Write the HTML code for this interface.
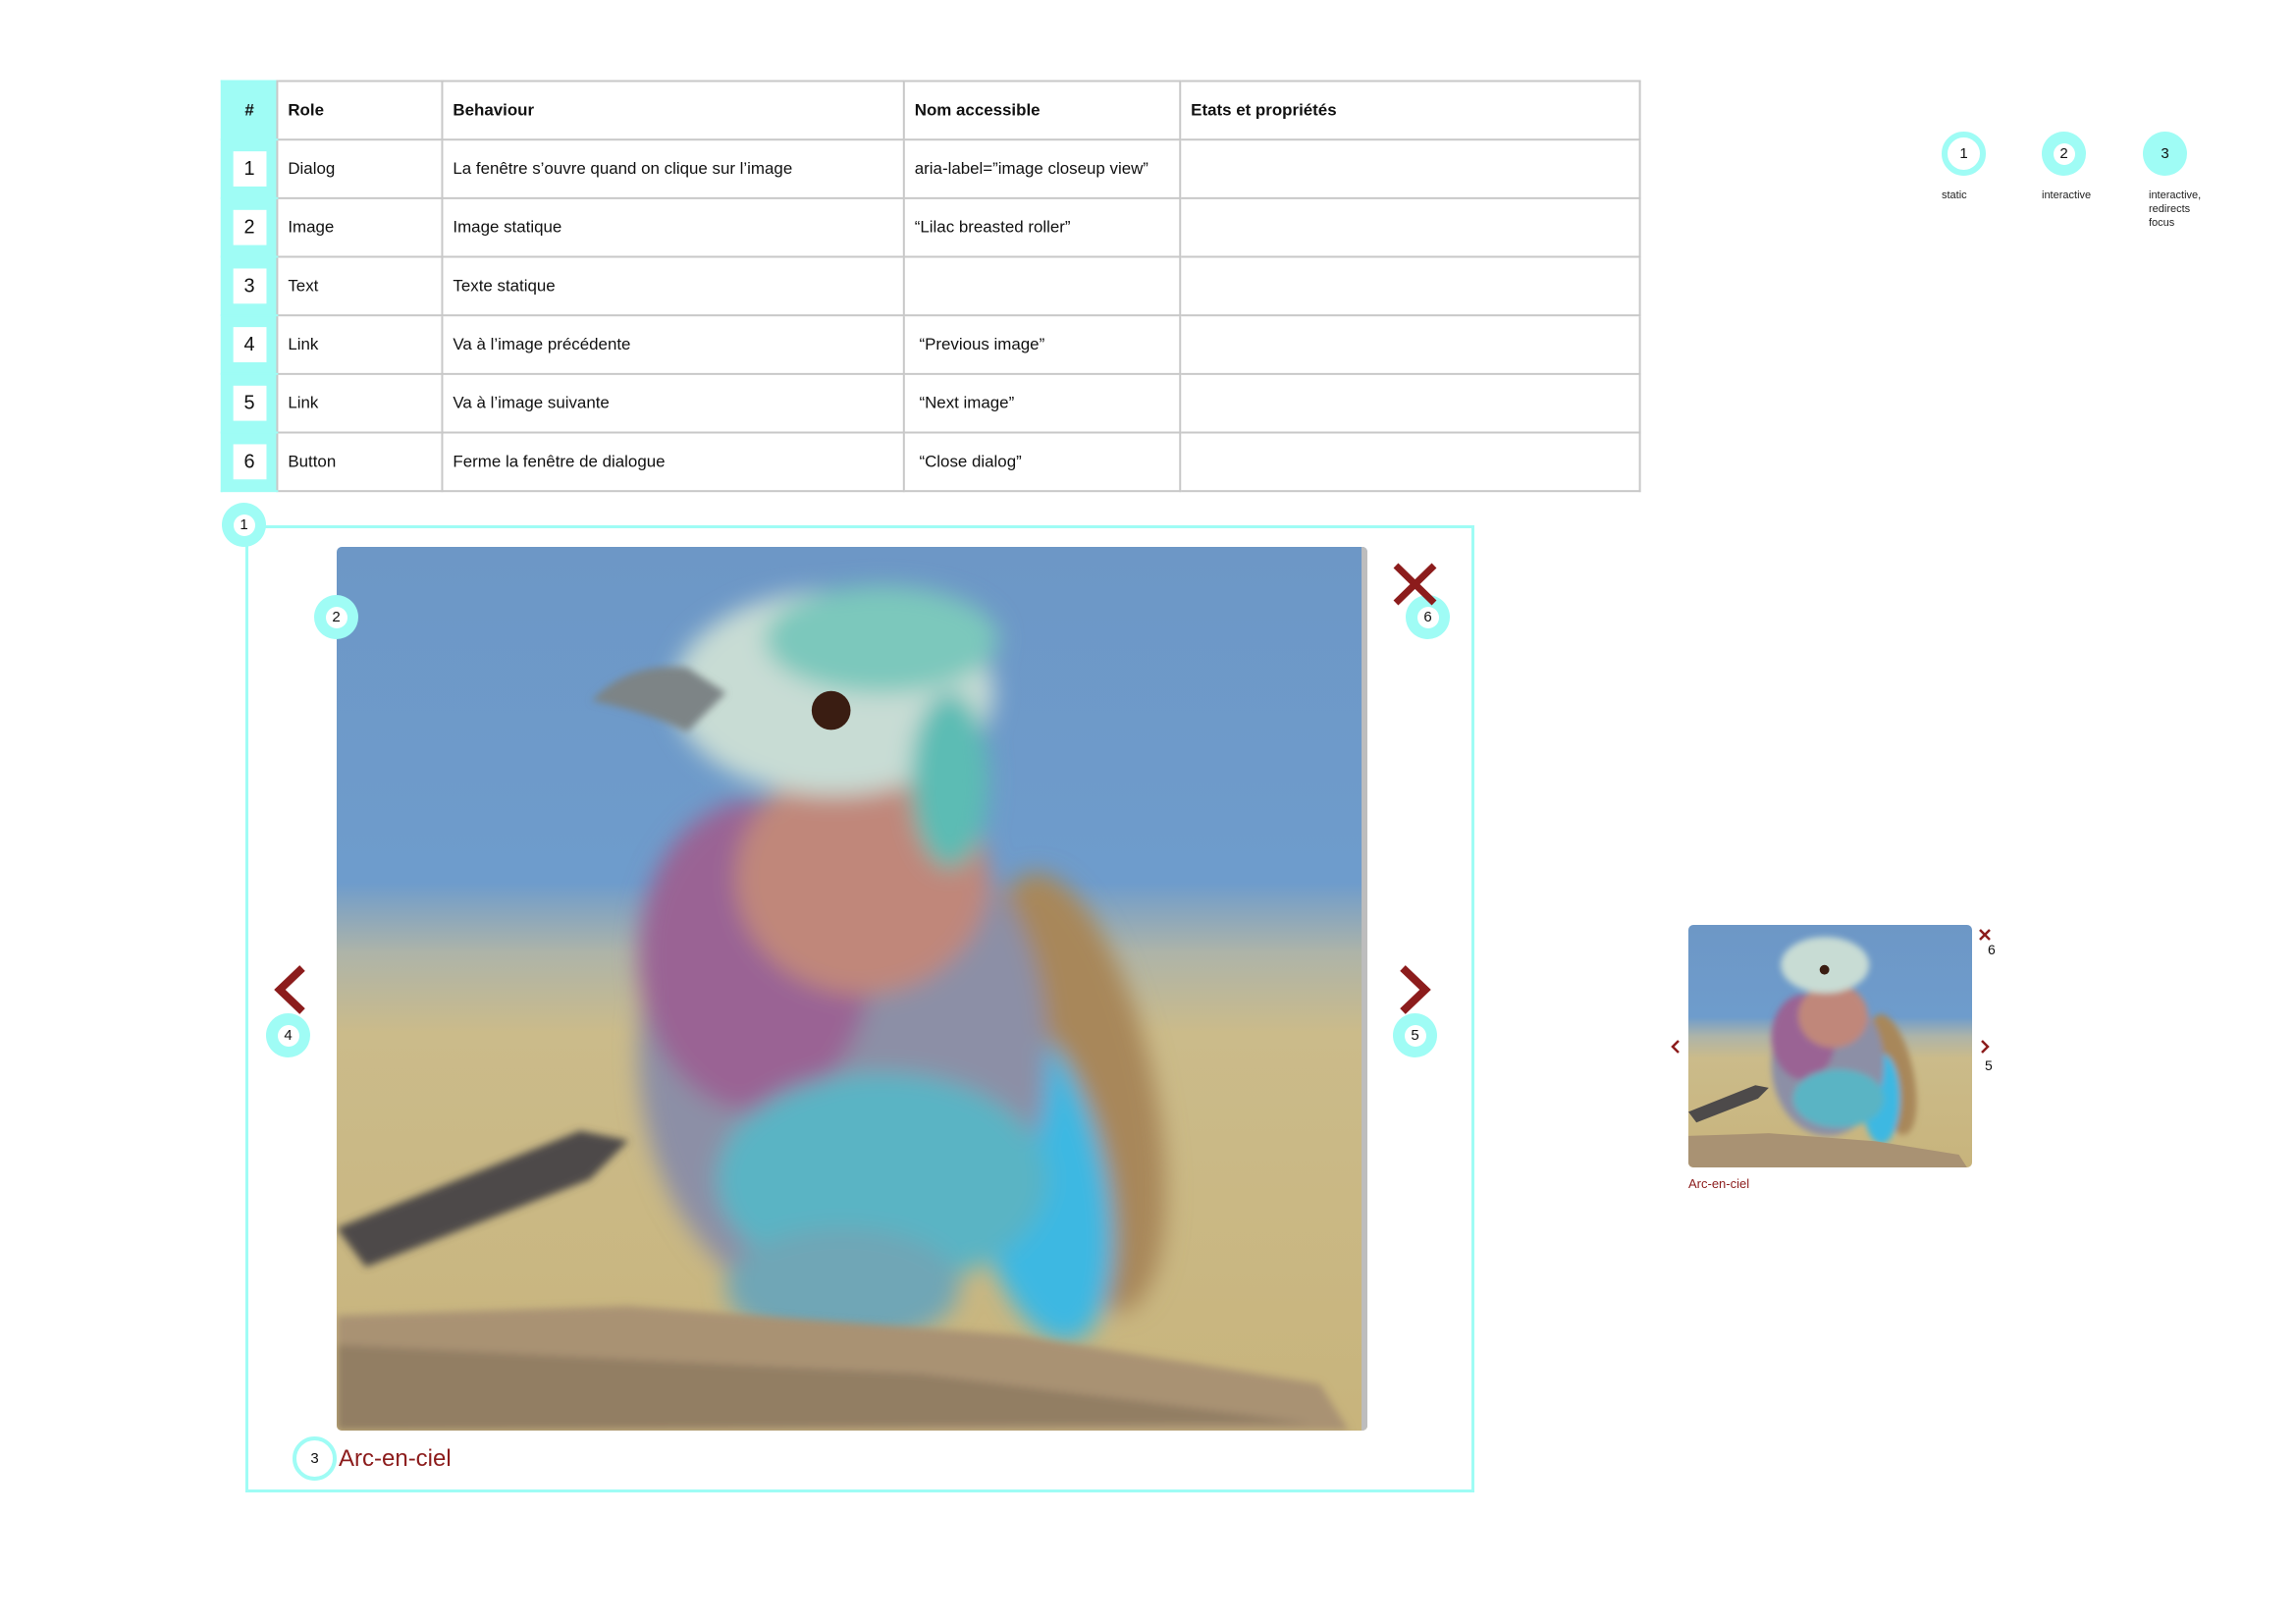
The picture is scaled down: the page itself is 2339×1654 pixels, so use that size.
<!DOCTYPE html>
<html><head><meta charset="utf-8">
<style>
*{margin:0;padding:0;box-sizing:border-box}
body{width:2339px;height:1654px;background:#fff;position:relative;font-family:"Liberation Sans",Roboto,sans-serif;color:#111;overflow:hidden}
.abs{position:absolute}
#w{position:absolute;left:0;top:0;width:2339px;height:1654px;transform:scale(0.9944);transform-origin:0 0}
table{position:absolute;left:226px;top:82px;border-collapse:collapse;font-size:17px;table-layout:fixed;width:1453px}
td,th{border:2px solid #c8c8c8;height:60px;text-align:left;padding-left:10px;vertical-align:middle;white-space:nowrap}
th{font-weight:bold}
td.n,th.n{background:#9ffcf5;padding:0;text-align:center;border-color:#9ffcf5 #c8c8c8 #9ffcf5 #9ffcf5}
td.n span{display:inline-block;background:#fff;width:34px;height:36px;line-height:36px;font-size:20px}
.b{position:absolute;width:45px;height:45px;border-radius:50%;background:#9ffcf5;display:flex;align-items:center;justify-content:center;font-size:15px}
.b span{width:22px;height:22px;border-radius:50%;background:#fff;display:flex;align-items:center;justify-content:center}
.lg{position:absolute;font-size:11px;line-height:14px;color:#222}
</style></head><body>
<svg width="0" height="0" style="position:absolute"><defs>
<linearGradient id="bg" x1="0" y1="0" x2="0" y2="1">
<stop offset="0" stop-color="#6d97c6"/><stop offset="0.38" stop-color="#6e9ccc"/><stop offset="0.46" stop-color="#aeb4a8"/><stop offset="0.55" stop-color="#cbbb8a"/><stop offset="1" stop-color="#c8b47c"/></linearGradient>
<filter id="bl"><feGaussianBlur stdDeviation="12"/></filter>
<filter id="bl2"><feGaussianBlur stdDeviation="4"/></filter>
</defs></svg>
<div id="w">
<table>
<colgroup><col style="width:57px"><col style="width:169px"><col style="width:473px"><col style="width:283px"><col style="width:471px"></colgroup>
<tr><th class="n">#</th><th>Role</th><th>Behaviour</th><th>Nom accessible</th><th>Etats et propriétés</th></tr>
<tr><td class="n"><span>1</span></td><td>Dialog</td><td>La fenêtre s’ouvre quand on clique sur l’image</td><td>aria-label=”image closeup view”</td><td></td></tr>
<tr><td class="n"><span>2</span></td><td>Image</td><td>Image statique</td><td>“Lilac breasted roller”</td><td></td></tr>
<tr><td class="n"><span>3</span></td><td>Text</td><td>Texte statique</td><td></td><td></td></tr>
<tr><td class="n"><span>4</span></td><td>Link</td><td>Va à l’image précédente</td><td>&nbsp;“Previous image”</td><td></td></tr>
<tr><td class="n"><span>5</span></td><td>Link</td><td>Va à l’image suivante</td><td>&nbsp;“Next image”</td><td></td></tr>
<tr><td class="n"><span>6</span></td><td>Button</td><td>Ferme la fenêtre de dialogue</td><td>&nbsp;“Close dialog”</td><td></td></tr>
</table>
</div>

<!-- dialog frame -->
<div class="abs" style="left:250px;top:535px;width:1252px;height:985px;border:3px solid #9ffcf5"></div>

<svg class="abs" style="left:343px;top:557px;border-radius:5px" width="1050" height="900" viewBox="0 0 1059 908" preserveAspectRatio="none">
<rect width="1059" height="908" fill="url(#bg)"/>
<rect x="1053" width="6" height="908" fill="#bdbdbd"/>
<g filter="url(#bl)">
<ellipse cx="760" cy="560" rx="80" ry="230" fill="#a8875a" transform="rotate(-12 760 560)"/>
<ellipse cx="720" cy="650" rx="70" ry="170" fill="#3cb8e2" transform="rotate(-12 720 650)"/>
<ellipse cx="520" cy="520" rx="210" ry="270" fill="#8c8fa6"/>
<ellipse cx="430" cy="420" rx="120" ry="160" fill="#9a6494"/>
<ellipse cx="540" cy="340" rx="130" ry="120" fill="#c0877a"/>
<ellipse cx="560" cy="650" rx="170" ry="110" fill="#5ab4c4"/>
<ellipse cx="520" cy="760" rx="120" ry="60" fill="#6fa6b6"/>
<ellipse cx="510" cy="150" rx="165" ry="105" fill="#c8dcd4"/>
<ellipse cx="560" cy="95" rx="120" ry="55" fill="#7cc8bc"/>
<ellipse cx="630" cy="240" rx="40" ry="90" fill="#5cbcb4"/>
</g>
<path d="M262 158 Q300 118 360 124 L400 150 L360 190 Q320 170 262 158Z" fill="#7d8486" filter="url(#bl2)"/>
<circle cx="508" cy="168" r="20" fill="#3a1d12"/>
<g filter="url(#bl2)">
<path d="M0 790 L0 908 L1040 908 L1010 860 L700 810 L300 780 Z" fill="#a99273"/>
<path d="M0 820 L600 850 L1000 900 L0 908Z" fill="#7b6a55" opacity="0.5"/>
<path d="M0 700 L250 600 L300 610 L260 650 L30 740Z" fill="#4d4a4a"/>
</g>
</svg>

<div class="b" style="left:226px;top:512px"><span>1</span></div>
<div class="b" style="left:320px;top:606px"><span>2</span></div>
<div class="b" style="left:1432px;top:606px"><span>6</span></div>
<div class="b" style="left:271px;top:1032px"><span>4</span></div>
<div class="b" style="left:1419px;top:1032px"><span>5</span></div>
<div class="b" style="left:298px;top:1463px;background:#fff;border:4px solid #9ffcf5">3</div>

<svg class="abs" style="left:1416px;top:570px" width="52" height="52"><path d="M6 6 L45 44 M45 6 L6 44" stroke="#8c1c1c" stroke-width="7"/></svg>
<svg class="abs" style="left:275px;top:981px" width="40" height="54"><path d="M33 5 L10 27 L33 49" stroke="#8c1c1c" stroke-width="8" fill="none"/></svg>
<svg class="abs" style="left:1422px;top:981px" width="40" height="54"><path d="M7 5 L30 27 L7 49" stroke="#8c1c1c" stroke-width="8" fill="none"/></svg>
<div class="abs" style="left:345px;top:1471px;font-size:24px;color:#8c1c1c;line-height:30px">Arc-en-ciel</div>

<!-- legend -->
<div class="b" style="left:1978px;top:134px;background:#fff;border:6px solid #9ffcf5">1</div>
<div class="b" style="left:2080px;top:134px"><span>2</span></div>
<div class="b" style="left:2183px;top:134px">3</div>
<div class="lg" style="left:1978px;top:192px">static</div>
<div class="lg" style="left:2080px;top:192px">interactive</div>
<div class="lg" style="left:2189px;top:192px">interactive,<br>redirects<br>focus</div>

<!-- small preview -->
<svg class="abs" style="left:1720px;top:942px;border-radius:5px" width="289" height="247" viewBox="0 0 1059 908" preserveAspectRatio="none">
<rect width="1059" height="908" fill="url(#bg)"/>
<g filter="url(#bl)">
<ellipse cx="760" cy="560" rx="80" ry="230" fill="#a8875a" transform="rotate(-12 760 560)"/>
<ellipse cx="720" cy="650" rx="70" ry="170" fill="#3cb8e2"/>
<ellipse cx="520" cy="520" rx="210" ry="270" fill="#8c8fa6"/>
<ellipse cx="430" cy="420" rx="120" ry="160" fill="#9a6494"/>
<ellipse cx="540" cy="340" rx="130" ry="120" fill="#c0877a"/>
<ellipse cx="560" cy="650" rx="170" ry="110" fill="#5ab4c4"/>
<ellipse cx="510" cy="150" rx="165" ry="105" fill="#c8dcd4"/>
</g>
<circle cx="508" cy="168" r="18" fill="#3a1d12"/>
<path d="M0 790 L0 908 L1040 908 L1010 860 L700 810 L300 780 Z" fill="#a99273"/>
<path d="M0 700 L250 600 L300 610 L260 650 L30 740Z" fill="#4d4a4a"/>
</svg>
<svg class="abs" style="left:2014px;top:944px" width="16" height="16"><path d="M3 3 L13 13 M13 3 L3 13" stroke="#8c1c1c" stroke-width="2.5"/></svg>
<div class="abs" style="left:2025px;top:959px;font-size:14px">6</div>
<svg class="abs" style="left:1700px;top:1057px" width="14" height="18"><path d="M10 3 L4 9 L10 15" stroke="#8c1c1c" stroke-width="2.5" fill="none"/></svg>
<svg class="abs" style="left:2015px;top:1057px" width="14" height="18"><path d="M4 3 L10 9 L4 15" stroke="#8c1c1c" stroke-width="2.5" fill="none"/></svg>
<div class="abs" style="left:2022px;top:1077px;font-size:14px">5</div>
<div class="abs" style="left:1720px;top:1198px;font-size:13px;color:#8c1c1c">Arc-en-ciel</div>
</body></html>
